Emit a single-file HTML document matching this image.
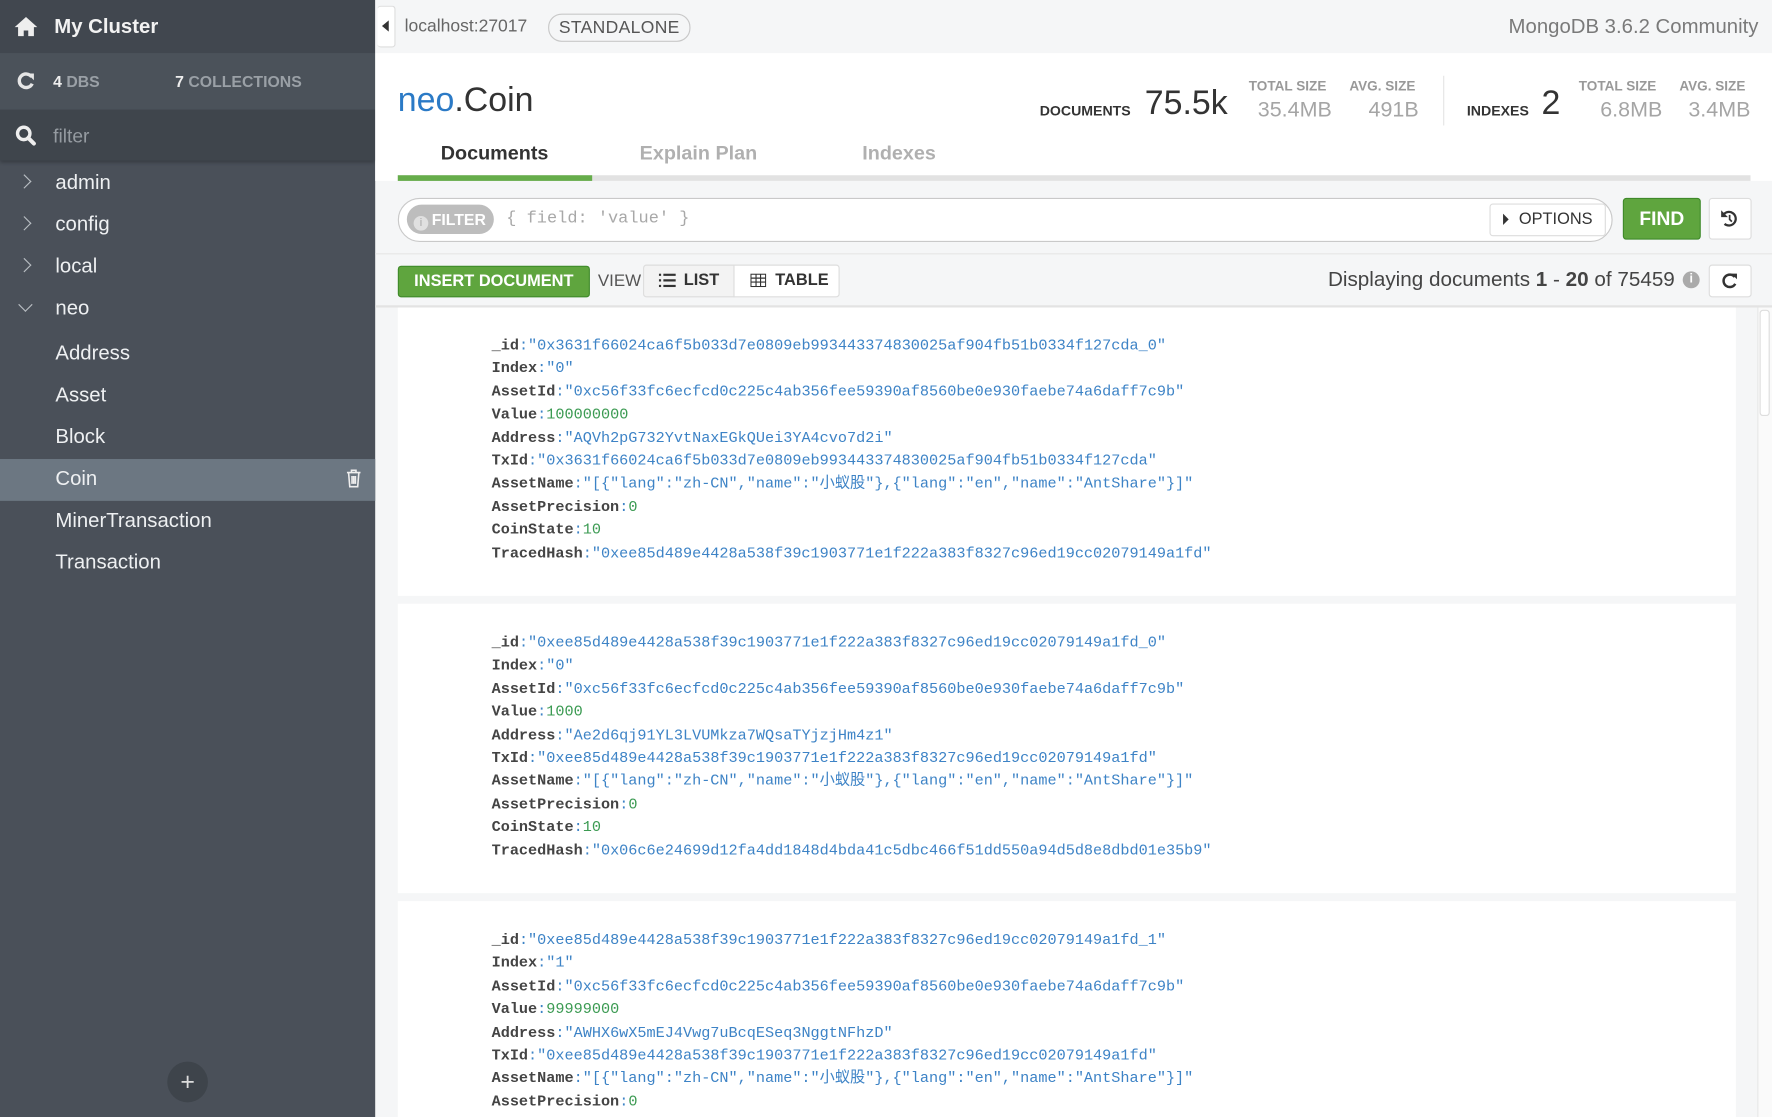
<!DOCTYPE html>
<html><head><meta charset="utf-8"><style>
html,body{margin:0;padding:0;width:1772px;height:1117px;overflow:hidden;background:#f5f6f7}
#w{position:absolute;left:0;top:0;width:1568px;height:988px;transform:scale(1.1301,1.1306);transform-origin:0 0;font-family:"Liberation Sans","Noto Sans CJK SC",sans-serif;overflow:hidden}
.a{position:absolute}
#sb{left:0;top:0;width:332px;height:988px;background:#4a5059}
.it{position:absolute;left:49px;font-size:18px;color:#eef0f2}
.ch{position:absolute;left:17px;width:8px;height:8px;border-right:1.5px solid #b8bdc2;border-bottom:1.5px solid #b8bdc2;transform:rotate(-45deg)}
.mono{font-family:"Liberation Mono","Noto Sans CJK SC",monospace}
.doc{position:absolute;left:352px;width:1184px;background:#fff}
.doc div{position:absolute;left:83px;font-size:13.45px;line-height:16px;height:16px;white-space:pre;color:#3d83c6;font-family:"Liberation Mono","Noto Sans CJK SC",monospace}
.doc b{color:#444}
.doc i{font-style:normal;color:#3b9a52}
.lbl{font-size:12px;font-weight:bold;color:#999;position:absolute}
.val{font-size:19px;color:#a5a5a5;position:absolute}
.btn{position:absolute;border:1px solid #ddd;background:#fff;border-radius:3px;box-sizing:border-box}
</style></head><body><div id="w">
<div id="sb" class="a">
 <div class="a" style="left:0;top:0;width:332px;height:47px;background:#41474f"></div>
 <svg class="a" style="left:12px;top:14px" width="22" height="19" viewBox="0 0 22 19"><path d="M11 1L1 10h3v8h5v-5h4v5h5v-8h3z" fill="#eee"/></svg>
 <div class="a" style="left:48px;top:13px;font-size:18px;font-weight:bold;color:#f2f2f2">My Cluster</div>
 <div class="a" style="left:0;top:47px;width:332px;height:50px;background:#4b525a"></div>
 <svg class="a" style="left:14px;top:63px" width="17" height="17" viewBox="0 0 17 17"><path d="M14 5A6 6 0 1 0 14.5 11" fill="none" stroke="#e6e6e6" stroke-width="3"/><path d="M10 2h6v6z" fill="#e6e6e6"/></svg>
 <div class="a" style="left:47px;top:64px;font-size:14px;font-weight:bold;color:#9aa0a6"><span style="color:#eee">4</span> DBS</div>
 <div class="a" style="left:155px;top:64px;font-size:14px;font-weight:bold;color:#9aa0a6"><span style="color:#eee">7</span> COLLECTIONS</div>
 <div class="a" style="left:0;top:97px;width:332px;height:45px;background:#3f454c;box-shadow:0 2px 3px rgba(0,0,0,.25)"></div>
 <svg class="a" style="left:13px;top:110px" width="20" height="20" viewBox="0 0 20 20"><circle cx="8" cy="8" r="5.5" fill="none" stroke="#eee" stroke-width="3"/><path d="M12 12l5 5" stroke="#eee" stroke-width="3.5" stroke-linecap="round"/></svg>
 <div class="a" style="left:47px;top:111px;font-size:17px;color:#959ba1">filter</div>
 <div class="ch" style="top:156px"></div><div class="it" style="top:151px">admin</div>
 <div class="ch" style="top:193px"></div><div class="it" style="top:188px">config</div>
 <div class="ch" style="top:230px"></div><div class="it" style="top:225px">local</div>
 <div class="ch" style="top:265px;left:18px;transform:rotate(45deg)"></div><div class="it" style="top:262px">neo</div>
 <div class="it" style="top:302px">Address</div>
 <div class="it" style="top:339px">Asset</div>
 <div class="it" style="top:376px">Block</div>
 <div class="a" style="left:0;top:406px;width:332px;height:37px;background:#6c7782"></div>
 <div class="it" style="top:413px">Coin</div>
 <svg class="a" style="left:306px;top:415px" width="14" height="17" viewBox="0 0 14 17"><path d="M1 3h12M5 3V1h4v2M2.5 3.5l1 12h7l1-12M5.5 6v7M7 6v7M8.5 6v7" fill="none" stroke="#eee" stroke-width="1.4"/></svg>
 <div class="it" style="top:450px">MinerTransaction</div>
 <div class="it" style="top:487px">Transaction</div>
 <div class="a" style="left:148px;top:939px;width:36px;height:36px;border-radius:50%;background:#3e444b;color:#ddd;font-size:22px;text-align:center;line-height:35px">+</div>
</div>
<div class="a" style="left:332px;top:0;width:1236px;height:47px;background:#f5f6f7"></div>
<div class="btn" style="left:334px;top:5px;width:16px;height:37px;border-left:none"></div>
<svg class="a" style="left:338px;top:18px" width="8" height="10"><path d="M6 0v10L0 5z" fill="#333"/></svg>
<div class="a" style="left:358px;top:15px;font-size:15.5px;color:#666">localhost:27017</div>
<div class="a" style="left:485px;top:12px;width:124px;height:23px;border:1px solid #c8c8c8;border-radius:12px;font-size:15.5px;color:#555;text-align:center;line-height:23px;letter-spacing:.3px">STANDALONE</div>
<div class="a" style="right:12px;top:13px;font-size:18px;color:#7a7a7a">MongoDB 3.6.2 Community</div>
<div class="a" style="left:332px;top:47px;width:1236px;height:113px;background:#fff"></div>
<div class="a" style="left:352px;top:72px;font-size:30px;color:#333"><span style="color:#2b7ac6">neo</span>.Coin</div>
<div class="a" style="left:920px;top:91px;font-size:12.5px;font-weight:bold;color:#333">DOCUMENTS</div>
<div class="a" style="left:1013px;top:75px;font-size:30px;color:#333">75.5k</div>
<div class="lbl" style="left:1105px;top:69px">TOTAL SIZE</div><div class="val" style="left:1113px;top:87px">35.4MB</div>
<div class="lbl" style="left:1194px;top:69px">AVG. SIZE</div><div class="val" style="left:1211px;top:87px">491B</div>
<div class="a" style="left:1277px;top:67px;width:1px;height:44px;background:#e5e5e5"></div>
<div class="a" style="left:1298px;top:91px;font-size:12.5px;font-weight:bold;color:#333">INDEXES</div>
<div class="a" style="left:1364px;top:75px;font-size:30px;color:#333">2</div>
<div class="lbl" style="left:1397px;top:69px">TOTAL SIZE</div><div class="val" style="left:1416px;top:87px">6.8MB</div>
<div class="lbl" style="left:1486px;top:69px">AVG. SIZE</div><div class="val" style="left:1494px;top:87px">3.4MB</div>
<div class="a" style="left:390px;top:125px;font-size:17.5px;font-weight:bold;color:#333">Documents</div>
<div class="a" style="left:566px;top:125px;font-size:17.5px;font-weight:bold;color:#b0b0b0">Explain Plan</div>
<div class="a" style="left:763px;top:125px;font-size:17.5px;font-weight:bold;color:#b0b0b0">Indexes</div>
<div class="a" style="left:352px;top:155px;width:1197px;height:5px;background:#e2e2e2"></div>
<div class="a" style="left:352px;top:155px;width:172px;height:5px;background:#66ad4b"></div>
<div class="a" style="left:352px;top:175px;width:1075px;height:39px;border:1px solid #c9c9c9;border-radius:20px;background:#fff;box-sizing:border-box"></div>
<div class="a" style="left:360px;top:181px;width:77px;height:26px;border-radius:13px;background:#bdbdbd;color:#fff;font-size:14px;font-weight:bold;line-height:26px"><span style="display:inline-block;width:13px;height:13px;border-radius:50%;background:#e0e0e0;color:#bdbdbd;font-size:10px;text-align:center;line-height:13px;margin:0 3px 0 6px;vertical-align:-1px">i</span>FILTER</div>
<div class="a mono" style="left:448px;top:185px;font-size:15px;color:#a8a8a8">{ field: 'value' }</div>
<div class="btn" style="left:1318px;top:180px;width:103px;height:29px;font-size:14.5px;color:#333;line-height:27px;padding-left:25px">OPTIONS</div>
<svg class="a" style="left:1330px;top:189px" width="6" height="10"><path d="M0 0l5 5-5 5z" fill="#333"/></svg>
<div class="a" style="left:1436px;top:175px;width:69px;height:37px;background:#5fa53e;border:1px solid #3f8a2a;box-sizing:border-box;border-radius:3px;color:#fff;font-weight:bold;font-size:17px;text-align:center;line-height:35px">FIND</div>
<div class="btn" style="left:1512px;top:175px;width:38px;height:37px"></div>
<svg class="a" style="left:1522px;top:185px" width="17" height="17" viewBox="0 0 17 17"><path d="M3 5A6 6 0 1 1 4 13" fill="none" stroke="#333" stroke-width="2"/><path d="M1 1v6h6z" fill="#333"/><path d="M8.5 5v4l2 2" fill="none" stroke="#333" stroke-width="1.5"/></svg>
<div class="a" style="left:332px;top:224px;width:1236px;height:1px;background:#e6e6e6"></div>
<div class="a" style="left:352px;top:235px;width:170px;height:28px;background:#5fa53e;border:1px solid #3f8a2a;box-sizing:border-box;border-radius:3px;color:#fff;font-weight:bold;font-size:14.5px;text-align:center;line-height:26px">INSERT DOCUMENT</div>
<div class="a" style="left:529px;top:240px;font-size:15px;color:#555">VIEW</div>
<div class="btn" style="left:569px;top:234px;width:81px;height:29px;background:#f3f3f3;font-size:14.5px;font-weight:bold;color:#333;line-height:27px;padding-left:35px;border-radius:3px 0 0 3px">LIST</div>
<svg class="a" style="left:583px;top:242px" width="15" height="12"><path d="M0 1h2M0 6h2M0 11h2M4 1h11M4 6h11M4 11h11" stroke="#333" stroke-width="2"/></svg>
<div class="btn" style="left:649px;top:234px;width:94px;height:29px;font-size:14.5px;font-weight:bold;color:#333;line-height:27px;padding-left:36px;border-radius:0 3px 3px 0">TABLE</div>
<svg class="a" style="left:664px;top:242px" width="14" height="12"><path d="M.5.5h13v11H.5zM.5 4h13M.5 7.5h13M5 .5v11M9 .5v11" fill="none" stroke="#333" stroke-width="1"/></svg>
<div class="a" style="right:86px;top:236px;font-size:18.3px;color:#444">Displaying documents <b>1</b> - <b>20</b> of 75459</div>
<div class="a" style="left:1489px;top:240px;width:15px;height:15px;border-radius:50%;background:#aaa;color:#fff;font-size:11px;text-align:center;line-height:15px;font-weight:bold">i</div>
<div class="btn" style="left:1512px;top:234px;width:38px;height:29px"></div>
<svg class="a" style="left:1523px;top:241px" width="15" height="15" viewBox="0 0 15 15"><path d="M12 4A5.5 5.5 0 1 0 12.5 10" fill="none" stroke="#333" stroke-width="2.2"/><path d="M9 1h5v5z" fill="#333"/></svg>
<div class="a" style="left:332px;top:270px;width:1236px;height:2px;background:#e3e3e3"></div>
<div class="doc" style="top:272px;height:255px">
<div style="top:27px"><b>_id</b>:"0x3631f66024ca6f5b033d7e0809eb993443374830025af904fb51b0334f127cda_0"</div>
<div style="top:47.4px"><b>Index</b>:"0"</div>
<div style="top:67.8px"><b>AssetId</b>:"0xc56f33fc6ecfcd0c225c4ab356fee59390af8560be0e930faebe74a6daff7c9b"</div>
<div style="top:88.2px"><b>Value</b>:<i>100000000</i></div>
<div style="top:108.6px"><b>Address</b>:"AQVh2pG732YvtNaxEGkQUei3YA4cvo7d2i"</div>
<div style="top:129px"><b>TxId</b>:"0x3631f66024ca6f5b033d7e0809eb993443374830025af904fb51b0334f127cda"</div>
<div style="top:149.4px"><b>AssetName</b>:"[{"lang":"zh-CN","name":"小蚁股"},{"lang":"en","name":"AntShare"}]"</div>
<div style="top:169.8px"><b>AssetPrecision</b>:<i>0</i></div>
<div style="top:190.2px"><b>CoinState</b>:<i>10</i></div>
<div style="top:210.6px"><b>TracedHash</b>:"0xee85d489e4428a538f39c1903771e1f222a383f8327c96ed19cc02079149a1fd"</div>
</div>
<div class="doc" style="top:534px;height:256px">
<div style="top:28px"><b>_id</b>:"0xee85d489e4428a538f39c1903771e1f222a383f8327c96ed19cc02079149a1fd_0"</div>
<div style="top:48.4px"><b>Index</b>:"0"</div>
<div style="top:68.8px"><b>AssetId</b>:"0xc56f33fc6ecfcd0c225c4ab356fee59390af8560be0e930faebe74a6daff7c9b"</div>
<div style="top:89.2px"><b>Value</b>:<i>1000</i></div>
<div style="top:109.6px"><b>Address</b>:"Ae2d6qj91YL3LVUMkza7WQsaTYjzjHm4z1"</div>
<div style="top:130px"><b>TxId</b>:"0xee85d489e4428a538f39c1903771e1f222a383f8327c96ed19cc02079149a1fd"</div>
<div style="top:150.4px"><b>AssetName</b>:"[{"lang":"zh-CN","name":"小蚁股"},{"lang":"en","name":"AntShare"}]"</div>
<div style="top:170.8px"><b>AssetPrecision</b>:<i>0</i></div>
<div style="top:191.2px"><b>CoinState</b>:<i>10</i></div>
<div style="top:211.6px"><b>TracedHash</b>:"0x06c6e24699d12fa4dd1848d4bda41c5dbc466f51dd550a94d5d8e8dbd01e35b9"</div>
</div>
<div class="doc" style="top:797px;height:200px">
<div style="top:28px"><b>_id</b>:"0xee85d489e4428a538f39c1903771e1f222a383f8327c96ed19cc02079149a1fd_1"</div>
<div style="top:48.4px"><b>Index</b>:"1"</div>
<div style="top:68.8px"><b>AssetId</b>:"0xc56f33fc6ecfcd0c225c4ab356fee59390af8560be0e930faebe74a6daff7c9b"</div>
<div style="top:89.2px"><b>Value</b>:<i>99999000</i></div>
<div style="top:109.6px"><b>Address</b>:"AWHX6wX5mEJ4Vwg7uBcqESeq3NggtNFhzD"</div>
<div style="top:130px"><b>TxId</b>:"0xee85d489e4428a538f39c1903771e1f222a383f8327c96ed19cc02079149a1fd"</div>
<div style="top:150.4px"><b>AssetName</b>:"[{"lang":"zh-CN","name":"小蚁股"},{"lang":"en","name":"AntShare"}]"</div>
<div style="top:170.8px"><b>AssetPrecision</b>:<i>0</i></div>
</div>
<div class="a" style="left:1555px;top:272px;width:13px;height:716px;background:#fafafa;border-left:1px solid #e6e6e6"></div>
<div class="a" style="left:1557px;top:274px;width:9px;height:94px;background:#fff;border:1px solid #ddd;border-radius:3px;box-sizing:border-box"></div>
</div></body></html>
